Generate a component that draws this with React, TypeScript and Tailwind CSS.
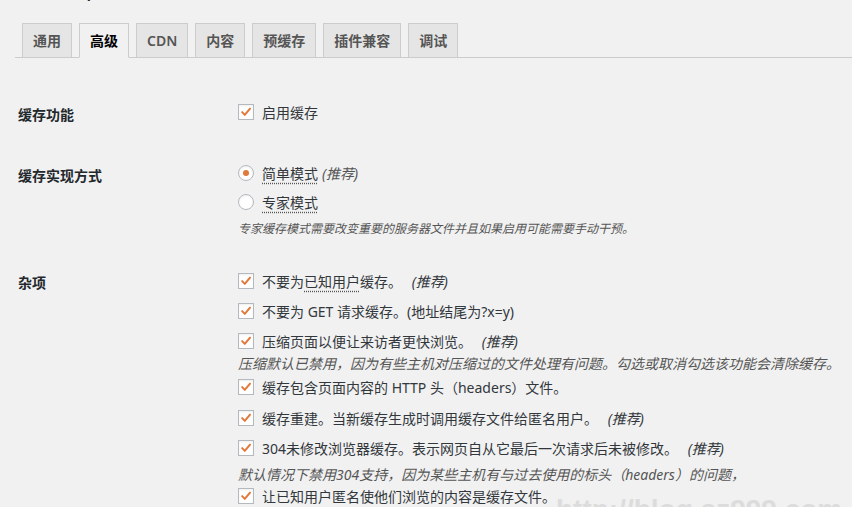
import React from "react";

const tabs = ["通用", "高级", "CDN", "内容", "预缓存", "插件兼容", "调试"];

const Check = () => (
  <span className="w-4 h-4 shrink-0 border border-[#b4b9be] bg-white flex items-center justify-center shadow-[inset_0_1px_2px_rgba(0,0,0,0.07)]">
    <svg viewBox="0 0 16 16" className="w-[14px] h-[14px]">
      <path d="M3.6 8.2 L6.6 11.3 L12.6 4.2" fill="none" stroke="#e0793a" strokeWidth="2.3" strokeLinecap="round" strokeLinejoin="round" />
    </svg>
  </span>
);

const Radio = ({ on }: { on?: boolean }) => (
  <span className="w-4 h-4 shrink-0 rounded-full border border-[#b4b9be] bg-white flex items-center justify-center shadow-[inset_0_1px_2px_rgba(0,0,0,0.07)]">
    {on && <span className="w-[6px] h-[6px] rounded-full bg-[#e0793a]" />}
  </span>
);

const Rec = () => <i className="ml-[6px]">(推荐)</i>;

const Line = ({ mt = "", children, radio, on }: { mt?: string; children: React.ReactNode; radio?: boolean; on?: boolean }) => (
  <div className={`flex items-center h-[20px] gap-[8px] ${mt}`}>
    {radio ? <Radio on={on} /> : <Check />}
    <span className="whitespace-nowrap">{children}</span>
  </div>
);

const Dotted = ({ children }: { children: React.ReactNode }) => (
  <span className="underline decoration-dotted decoration-[#555] underline-offset-[4px]">{children}</span>
);

export default function App() {
  return (
    <div className="relative h-screen overflow-hidden bg-[#f1f1f1] text-[14px] text-[#32373c] font-['Noto_Sans','Noto_Sans_CJK_SC',sans-serif]">
      <h1 className="ml-[15px] -mt-[25px] h-[27px] text-[23px] leading-[27px] text-[#23282d] font-['Liberation_Sans',sans-serif]">
        WP Super Cache
      </h1>

      <div className="ml-[15px] mt-[21px] flex gap-[7px] pl-[7px] border-b border-[#ccc]">
        {tabs.map((t, i) => (
          <div
            key={t}
            className={
              i === 1
                ? "h-[35px] -mb-px border border-[#ccc] border-b-[#f1f1f1] bg-[#f1f1f1] px-[10px] leading-[33px] font-semibold text-black"
                : "h-[35px] -mb-px border border-[#ccc] bg-[#e5e5e5] px-[10px] leading-[33px] font-semibold text-[#555]"
            }
          >
            {t}
          </div>
        ))}
      </div>

      <div className="pl-[18px]">
        {/* 缓存功能 */}
        <div className="flex mt-[44px]">
          <div className="w-[220px] pt-[3px] leading-[20px] font-semibold text-[#23282d]">缓存功能</div>
          <div>
            <Line>启用缓存</Line>
          </div>
        </div>

        {/* 缓存实现方式 */}
        <div className="flex mt-[38px]">
          <div className="w-[220px] pt-[3px] leading-[20px] font-semibold text-[#23282d]">缓存实现方式</div>
          <div>
            <Line radio on>
              <Dotted>简单模式</Dotted>
              <i className="ml-[4px] text-[#555]">(推荐)</i>
            </Line>
            <Line radio mt="mt-[9px]">
              <Dotted>专家模式</Dotted>
            </Line>
            <p className="mt-[9px] text-[12px] leading-[16px] italic text-[#555]">
              专家缓存模式需要改变重要的服务器文件并且如果启用可能需要手动干预。
            </p>
          </div>
        </div>

        {/* 杂项 */}
        <div className="flex mt-[34px]">
          <div className="w-[220px] pt-[2px] leading-[20px] font-semibold text-[#23282d]">杂项</div>
          <div>
            <Line>
              不要为<Dotted>已知用户</Dotted>缓存。 <Rec />
            </Line>
            <Line mt="mt-[10px]">不要为 GET 请求缓存。(地址结尾为?x=y)</Line>
            <Line mt="mt-[10px]">
              压缩页面以便让来访者更快浏览。 <Rec />
            </Line>
            <p className="mt-[3px] leading-[20px] italic text-[#555] whitespace-nowrap">
              压缩默认已禁用，因为有些主机对压缩过的文件处理有问题。勾选或取消勾选该功能会清除缓存。
            </p>
            <Line mt="mt-[3px]">缓存包含页面内容的 HTTP 头（headers）文件。</Line>
            <Line mt="mt-[11px]">
              缓存重建。当新缓存生成时调用缓存文件给匿名用户。 <Rec />
            </Line>
            <Line mt="mt-[10px]">
              304未修改浏览器缓存。表示网页自从它最后一次请求后未被修改。 <Rec />
            </Line>
            <p className="mt-[7px] leading-[20px] italic text-[#555] whitespace-nowrap">
              默认情况下禁用304支持，因为某些主机有与过去使用的标头（headers）的问题，
            </p>
            <Line mt="mt-[1px]">让已知用户匿名使他们浏览的内容是缓存文件。</Line>
          </div>
        </div>
      </div>

      <div className="absolute left-[556px] top-[496px] text-[28px] leading-[28px] font-bold text-[#dcdcdc] font-['Liberation_Sans',sans-serif] whitespace-nowrap pointer-events-none">
        http://blog.sz999.com
      </div>
    </div>
  );
}
